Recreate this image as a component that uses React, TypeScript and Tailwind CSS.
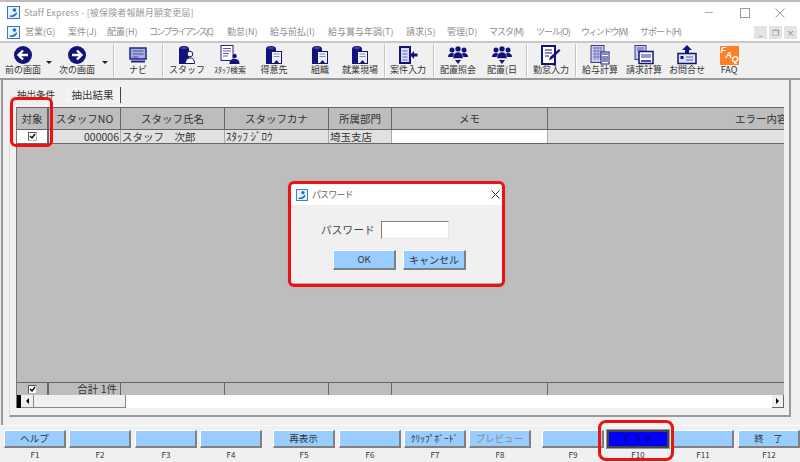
const font = "font-['Noto_Sans_CJK_JP','Noto_Sans',sans-serif]";

const menus = [
  { label: '営業(G)', w: 'w-[43px]', t: '' },
  { label: '案件(J)', w: 'w-[39px]', t: '' },
  { label: '配置(H)', w: 'w-[42px]', t: '' },
  { label: 'コンプライアンス(C)', w: 'w-[78px]', t: 'tracking-[-1.8px]' },
  { label: '勤怠(N)', w: 'w-[43px]', t: '' },
  { label: '給与前払(I)', w: 'w-[58px]', t: '' },
  { label: '給与賞与年調(T)', w: 'w-[78px]', t: '' },
  { label: '請求(S)', w: 'w-[41px]', t: '' },
  { label: '管理(D)', w: 'w-[42px]', t: '' },
  { label: 'マスタ(M)', w: 'w-[47px]', t: 'tracking-[-1px]' },
  { label: 'ツール(O)', w: 'w-[45px]', t: 'tracking-[-1px]' },
  { label: 'ウィンドウ(W)', w: 'w-[59px]', t: 'tracking-[-1.6px]' },
  { label: 'サポート(H)', w: 'w-[50px]', t: 'tracking-[-1.100px]' },
];

const columns = [
  { label: 'スタッフNO', w: 'w-[72px]' },
  { label: 'スタッフ氏名', w: 'w-[104px]' },
  { label: 'スタッフカナ', w: 'w-[104px]' },
  { label: '所属部門', w: 'w-[63px]' },
  { label: 'メモ', w: 'w-[156px]' },
];

const fnKeys = [
  { key: 'F1', label: 'ヘルプ', mr: 'mr-[3px]' },
  { key: 'F2', label: '', mr: 'mr-[4px]' },
  { key: 'F3', label: '', mr: 'mr-[3px]' },
  { key: 'F4', label: '', mr: 'mr-[11px]' },
  { key: 'F5', label: '再表示', mr: 'mr-[4px]' },
  { key: 'F6', label: '', mr: 'mr-[3px]' },
  { key: 'F7', label: 'ｸﾘｯﾌﾟﾎﾞｰﾄﾞ', mr: 'mr-[3px]' },
  { key: 'F8', label: 'プレビュー', mr: 'mr-[11px]', dim: true },
  { key: 'F9', label: '', mr: 'mr-[3px]' },
  { key: 'F10', label: 'C S V', mr: 'mr-[3px]', active: true },
  { key: 'F11', label: '', mr: 'mr-[4px]' },
  { key: 'F12', label: '終　了', mr: 'mr-0' },
];

function AppIcon({ size = 13 }: { size?: number }) {
  return (
    <svg width={size} height={size} viewBox="0 0 13 13">
      <rect x="0.5" y="0.5" width="12" height="12" fill="#e8f2fa" stroke="#3b78b5" />
      <circle cx="7.5" cy="4" r="1.8" fill="#1f6fc0" />
      <path d="M2.5 9.5 C5 10 8 8.5 9.5 6 L10 8 C8.5 10.5 5 11.5 2.5 10.5 Z" fill="#1f6fc0" />
    </svg>
  );
}

function CircleArrow({ dir }: { dir: 'left' | 'right' }) {
  return (
    <svg width="18" height="18" viewBox="0 0 18 18">
      <circle cx="9" cy="9" r="9" fill="#12127c" />
      <path
        d={dir === 'left' ? 'M14 9H5M9 4.500L4.500 9 9 13.500' : 'M4 9h9M9 4.500L13.500 9 9 13.500'}
        fill="none"
        stroke="#fff"
        strokeWidth="2.400"
      />
    </svg>
  );
}

function Navi() {
  return (
    <svg width="18" height="17" viewBox="0 0 18 17">
      <rect x="1" y="1" width="16" height="11" fill="#aab0dc" stroke="#20208a" strokeWidth="1.500" />
      <path d="M3.500 4h11M3.500 7h11M3.500 10h6" stroke="#4a4aa6" />
      <path d="M2 14.500h14" stroke="#20208a" strokeWidth="2" />
    </svg>
  );
}

function Binder({ person }: { person?: boolean }) {
  return (
    <svg width="18" height="20" viewBox="0 0 18 20">
      <path d="M1 4Q1 1 6 1T11 4V19H1Z" fill="#12127c" />
      <path d="M3.500 3h5" stroke="#7a7ac4" />
      {person ? (
        <>
          <circle cx="12" cy="9" r="2.800" fill="#fff" stroke="#12127c" />
          <path d="M7.500 18.500c0-4 2-5.500 4.500-5.500s4.500 1.500 4.500 5.500z" fill="#fff" stroke="#12127c" />
        </>
      ) : (
        <>
          <rect x="6.500" y="6.500" width="10" height="12" fill="#eef0fa" stroke="#12127c" />
          <path d="M8.500 9h6M8.500 11.500h6" stroke="#8a8ac4" />
          <path d="M9 18l2.500-3 2.500 3z" fill="#12127c" />
        </>
      )}
    </svg>
  );
}

function SearchDoc() {
  return (
    <svg width="20" height="20" viewBox="0 0 20 20">
      <rect x="1" y="0.500" width="12" height="15" fill="#fff" stroke="#20208a" />
      <path d="M3 3.500h8M3 6h8M3 8.500h6M3 11h5" stroke="#5a5ab0" />
      <circle cx="14.500" cy="11" r="2.500" fill="#12127c" stroke="#fff" strokeWidth="0.500" />
      <path d="M9.500 19c0-4 2-5 5-5s5 1 5 5z" fill="#12127c" />
    </svg>
  );
}

function CaseIn() {
  return (
    <svg width="19" height="18" viewBox="0 0 19 18">
      <rect x="1" y="1" width="10" height="16" fill="#d8dcf2" stroke="#12127c" strokeWidth="2" />
      <path d="M3.500 5h5M3.500 8h5M3.500 11h5M3.500 14h5" stroke="#6a6ab8" />
      <path d="M11 9l4-4v2.500h3.500v3H15V13z" fill="#12127c" />
    </svg>
  );
}

function Group() {
  return (
    <svg width="20" height="20" viewBox="0 0 20 20">
      <circle cx="4" cy="5" r="2.500" fill="#12127c" />
      <circle cx="16" cy="5" r="2.500" fill="#12127c" />
      <path d="M0 12c0-3 2-4 4-4s4 1 4 4zM12 12c0-3 2-4 4-4s4 1 4 4z" fill="#12127c" />
      <circle cx="10" cy="4" r="3" fill="#12127c" stroke="#fff" strokeWidth="0.500" />
      <path d="M5 13.500c0-4 2-6.500 5-6.500s5 2.500 5 6.500z" fill="#12127c" stroke="#fff" strokeWidth="0.500" />
      <path d="M7 15h6l-3 4z" fill="#12127c" />
    </svg>
  );
}

function Pencil() {
  return (
    <svg width="20" height="20" viewBox="0 0 20 20">
      <rect x="1" y="1" width="13" height="18" fill="#fff" stroke="#12127c" strokeWidth="2" />
      <path d="M4 5h7M4 8h7M4 11h4" stroke="#12127c" />
      <path d="M8 15l1-3 9-8 1.500 1.500-8.500 8.500z" fill="#12127c" />
    </svg>
  );
}

function Calc() {
  return (
    <svg width="20" height="20" viewBox="0 0 20 20">
      <rect x="1" y="0.500" width="13" height="17" fill="#c8cce8" stroke="#3a3a8c" />
      <path d="M3 3h9M3 6h9M3 9h9M3 12h9M5 2v13M8 2v13M11 2v13" stroke="#5a5ab0" strokeWidth="0.700" />
      <rect x="11" y="7" width="8" height="12" fill="#fff" stroke="#12127c" />
      <path d="M13 11v6M15 11v6M17 11v6M12 9h6" stroke="#12127c" />
    </svg>
  );
}

function Invoice() {
  return (
    <svg width="20" height="20" viewBox="0 0 20 20">
      <rect x="1" y="0.500" width="11" height="14" fill="#c8cce8" stroke="#3a3a8c" />
      <path d="M3 3h7M3 5h7" stroke="#5a5ab0" />
      <rect x="5" y="6.500" width="14" height="12" fill="#fff" stroke="#12127c" strokeWidth="1.500" />
      <rect x="7" y="9" width="10" height="4" fill="#9a9ac8" />
      <path d="M7 16h10" stroke="#12127c" strokeWidth="1.500" />
    </svg>
  );
}

function Contact() {
  return (
    <svg width="20" height="20" viewBox="0 0 20 20">
      <path d="M10 0l5 5h-3v3H8V5H5z" fill="#12127c" />
      <rect x="1" y="8.500" width="18" height="10" fill="#dfe2f2" stroke="#12127c" strokeWidth="1.500" />
      <rect x="3.500" y="11" width="3" height="3" fill="#12127c" />
      <path d="M9 12h7M9 15h7" stroke="#5a5ab0" />
    </svg>
  );
}

function Faq() {
  return (
    <div className="w-[19px] h-[19px] bg-[#ff7f27] relative overflow-hidden">
      <span className="absolute left-[1px] top-[-1px] text-[9px] leading-[11px] italic font-bold text-white font-['Liberation_Sans',sans-serif]">F</span>
      <span className="absolute left-[6px] top-[4px] text-[9px] leading-[11px] italic font-bold text-white font-['Liberation_Sans',sans-serif]">A</span>
      <span className="absolute left-[12px] top-[8px] text-[9px] leading-[11px] italic font-bold text-white font-['Liberation_Sans',sans-serif]">Q</span>
    </div>
  );
}

function Tool({ label, w, children, small }: { label: string; w: string; children: React.ReactNode; small?: boolean }) {
  return (
    <div className={`${w} shrink-0 flex flex-col items-center`}>
      <div className="h-[22px] flex items-center justify-center">{children}</div>
      <span className={`${small ? 'text-[8px]' : 'text-[9px]'} leading-[14px] -mt-[3px] text-[#333] whitespace-nowrap`}>{label}</span>
    </div>
  );
}

function Sep({ mx }: { mx: string }) {
  return <div className={`w-[2px] h-[33px] bg-[#c4c4c4] border-r border-white shrink-0 ${mx}`} />;
}

function Caret({ mx }: { mx: string }) {
  return <div className={`w-0 h-0 mt-[17px] shrink-0 border-x-[3px] border-x-transparent border-t-[3px] border-t-[#222] ${mx}`} />;
}

function Check() {
  return (
    <div className="w-[9px] h-[9px] bg-white border border-[#555] border-r-[#bbb] border-b-[#bbb] flex items-center justify-center">
      <svg width="7" height="7" viewBox="0 0 7 7">
        <path d="M1 3l2 2 3-4" fill="none" stroke="#000" strokeWidth="1.300" />
      </svg>
    </div>
  );
}

function Raised({ children, size }: { children?: React.ReactNode; size: string }) {
  return (
    <button className={`${size} bg-[#99ccff] border-t border-l border-t-white border-l-white border-r-2 border-b-2 border-r-[#808080] border-b-[#808080] text-[9.500px] leading-none text-[#333] flex items-center justify-center whitespace-nowrap`}>
      {children}
    </button>
  );
}

export default function App() {
  return (
    <div className={`${font} w-[800px] h-[462px] relative overflow-hidden bg-[#f0f0f0] border-t-2 border-[#bdbdbd] flex flex-col`}>
      {/* Title Bar */}
      <div className="h-[21px] bg-white flex items-center pl-[7px] shrink-0">
        <AppIcon />
        <span className="ml-[4px] text-[9px] tracking-[0.15px] text-[#9a9a9a]">Staff Express - [被保険者報酬月額変更届]</span>
        <div className="ml-auto flex items-center">
          <div className="w-[8px] h-px bg-[#aaa] mr-[27px]" />
          <div className="w-[10px] h-[10px] border border-[#999] mr-[25px]" />
          <svg width="10" height="10" viewBox="0 0 10 10" className="mr-[15px]">
            <path d="M0.500 0.500l9 9M9.500 0.500l-9 9" stroke="#999" />
          </svg>
        </div>
      </div>

      {/* Menu Bar */}
      <div className="h-[18px] bg-white flex items-center pl-[7px] shrink-0">
        <AppIcon />
        <div className="flex ml-[5px]">
          {menus.map((m) => (
            <span key={m.label} className={`${m.w} ${m.t} text-[9px] text-[#8c8c8c] whitespace-nowrap`}>{m.label}</span>
          ))}
        </div>
        <div className="ml-auto flex gap-[2px] mr-[3px]">
          {['_', '❐', '×'].map((c) => (
            <div key={c} className="w-[13px] h-[13px] bg-[#e4e4e4] text-[8px] leading-[13px] text-center text-[#777]">{c}</div>
          ))}
        </div>
      </div>

      {/* Toolbar */}
      <div className="h-[39px] border-t-2 border-b-2 border-t-[#c8c8c8] border-b-[#9a9a9a] flex items-start pt-[1px] shrink-0">
        <Tool label="前の画面" w="w-[46px]"><CircleArrow dir="left" /></Tool>
        <Caret mx="mr-[2px]" />
        <Tool label="次の画面" w="w-[46px]"><CircleArrow dir="right" /></Tool>
        <Caret mx="ml-[2px]" />
        <Sep mx="ml-[5px] mr-[1px]" />
        <Tool label="ナビ" w="w-[44px]"><Navi /></Tool>
        <Sep mx="ml-[2px] mr-[1px]" />
        <Tool label="スタッフ" w="w-[44px]"><Binder person /></Tool>
        <Tool label="ｽﾀｯﾌ検索" w="w-[42px]" small><SearchDoc /></Tool>
        <Tool label="得意先" w="w-[46px]"><Binder /></Tool>
        <Tool label="組織" w="w-[46px]"><Binder /></Tool>
        <Tool label="就業現場" w="w-[34px]"><Binder /></Tool>
        <Sep mx="ml-[7px] mr-[1px]" />
        <Tool label="案件入力" w="w-[42px]"><CaseIn /></Tool>
        <Sep mx="ml-[4px] mr-[1px]" />
        <Tool label="配置照会" w="w-[44px]"><Group /></Tool>
        <Tool label="配置(日" w="w-[44px]"><Group /></Tool>
        <Sep mx="ml-[2px] mr-[1px]" />
        <Tool label="勤怠入力" w="w-[44px]"><Pencil /></Tool>
        <Sep mx="ml-[2px] mr-[1px]" />
        <Tool label="給与計算" w="w-[44px]"><Calc /></Tool>
        <Tool label="請求計算" w="w-[44px]"><Invoice /></Tool>
        <Tool label="お問合せ" w="w-[42px]"><Contact /></Tool>
        <Tool label="FAQ" w="w-[42px]"><Faq /></Tool>
      </div>

      {/* Tab page */}
      <div className="h-[345px] ml-px mr-[9px] border-l-2 border-[#999] shrink-0">
        <div className="h-[27px] flex items-end pl-[14px] border-r-2 border-[#999]">
          <span className="block h-[10px] overflow-hidden text-[9.500px] leading-[8px] text-[#333] w-[48px] mb-[7px] whitespace-nowrap">抽出条件</span>
          <span className="h-[16px] w-[56px] flex items-center justify-center text-[10.500px] text-[#333] border-r border-[#444] mb-[4px] bg-[#f4f4f4]">抽出結果</span>
        </div>

        <div className="h-[310px] ml-[6px] border-l border-[#dcdcdc] border-r-2 border-b-2 border-r-[#999] border-b-[#999] pl-[6px] pr-[5px] pb-[7px]">
          <div className="h-full border-l border-[#777] bg-[#bdbdbd] flex flex-col text-[10.500px] text-[#333]">
            <div className="h-[23px] flex border-t border-b border-[#666] shrink-0">
              <div className="w-[32px] border-r-2 border-[#666] flex items-center justify-center">対象</div>
              {columns.map((c) => (
                <div key={c.label} className={`${c.w} border-r border-[#666] flex items-center justify-center whitespace-nowrap`}>{c.label}</div>
              ))}
              <div className="flex-1 flex items-center overflow-hidden whitespace-nowrap pl-[187px]">エラー内容</div>
            </div>
            <div className="h-[14px] flex border-b border-[#666] shrink-0 leading-[13px]">
              <div className="w-[32px] bg-white flex items-center justify-center border-r-2 border-[#666]"><Check /></div>
              <div className="w-[72px] bg-[#e1e1e1] text-right pr-px border-r border-[#aaa]">000006</div>
              <div className="w-[104px] bg-[#e1e1e1] pl-[1px] border-r border-[#aaa] whitespace-pre">スタッフ　次郎</div>
              <div className="w-[104px] bg-[#e1e1e1] pl-[1px] border-r border-[#aaa] text-[11px]">ｽﾀｯﾌ ｼﾞﾛｳ</div>
              <div className="w-[63px] bg-[#e1e1e1] pl-[1px] border-r border-[#aaa]">埼玉支店</div>
              <div className="w-[156px] bg-white border-r border-[#aaa]" />
              <div className="flex-1 bg-[#e1e1e1]" />
            </div>
            <div className="flex-1" />
            <div className="h-[13px] flex border-t border-[#666] shrink-0 leading-[12px]">
              <div className="w-[32px] border-r-2 border-[#666] flex items-center justify-center"><Check /></div>
              <div className="w-[72px] border-r border-[#666] text-right pr-[3px] whitespace-nowrap">合計 1件</div>
              <div className="w-[104px] border-r border-[#666]" />
              <div className="w-[104px] border-r border-[#666]" />
              <div className="w-[63px] border-r border-[#666]" />
              <div className="w-[156px] border-r border-[#666]" />
              <div className="flex-1" />
            </div>
            <div className="h-[13px] bg-white flex items-stretch shrink-0">
              <div className="w-[4px] bg-black" />
              <div className="w-[13px] bg-[#f0f0f0] border-r border-b border-[#888] flex items-center justify-center">
                <div className="w-0 h-0 border-y-[3px] border-y-transparent border-r-[3px] border-r-black" />
              </div>
              <div className="w-[92px] bg-[#f0f0f0] border-r border-b border-[#888]" />
              <div className="flex-1" />
              <div className="w-[12px] bg-[#f0f0f0] border-r border-b border-[#666] flex items-center justify-center">
                <div className="w-0 h-0 border-y-[3px] border-y-transparent border-l-[3px] border-l-black" />
              </div>
            </div>
          </div>
        </div>
      </div>

      {/* Function Keys */}
      <div className="pl-[4px] pt-[4px] flex shrink-0 border-t border-[#fafafa]">
        {fnKeys.map((k) => (
          <div key={k.key} className={`w-[62px] ${k.mr} shrink-0 flex flex-col items-center`}>
            {k.active ? (
              <div className="w-full h-[18px] bg-[#0000ff] border-2 border-[#444] outline outline-1 outline-[#999] flex items-center justify-center text-[9px] tracking-[1.5px] text-[#000050]">{k.label}</div>
            ) : (
              <Raised size="w-full h-[18px]"><span className={k.dim ? 'text-[#8a8a8a]' : ''}>{k.label}</span></Raised>
            )}
            <span className="text-[8px] leading-[13px] text-[#333]">{k.key}</span>
          </div>
        ))}
      </div>

      {/* Password Dialog */}
      <div className="absolute left-[291px] top-[182px] w-[211px] h-[99px] bg-[#f0f0f0] flex flex-col shadow-[0_0_6px_rgba(0,0,0,0.25)]">
        <div className="h-[21px] bg-white flex items-center pl-[5px] pr-[2px] shrink-0">
          <AppIcon size={12} />
          <span className="ml-[4px] text-[9px] tracking-[-0.900px] text-[#666] whitespace-nowrap">パスワード</span>
          <svg width="9" height="9" viewBox="0 0 9 9" className="ml-auto">
            <path d="M0.500 0.500l8 8M8.500 0.500l-8 8" stroke="#333" />
          </svg>
        </div>
        <div className="flex items-center mt-[16px] pl-[30px]">
          <span className="text-[10.500px] tracking-[0.300px] text-[#444] w-[60px] whitespace-nowrap">パスワード</span>
          <div className="w-[68px] h-[18px] bg-white border border-[#808080] border-r-[#e6e6e6] border-b-[#e6e6e6]" />
        </div>
        <div className="flex gap-[7px] mt-[11px] pl-[42px]">
          <Raised size="w-[63px] h-[20px]">OK</Raised>
          <Raised size="w-[63px] h-[20px]"><span className="text-[10px]">キャンセル</span></Raised>
        </div>
      </div>

      {/* Red callouts */}
      <div className="absolute left-[10px] top-[95px] w-[43px] h-[50px] border-[3px] border-[#ee1111] rounded-[6px]" />
      <div className="absolute left-[288px] top-[179px] w-[217px] h-[106px] border-[3px] border-[#ee1111] rounded-[6px]" />
      <div className="absolute left-[598px] top-[418px] w-[76px] h-[41px] border-[3px] border-[#ee1111] rounded-[8px]" />
    </div>
  );
}
